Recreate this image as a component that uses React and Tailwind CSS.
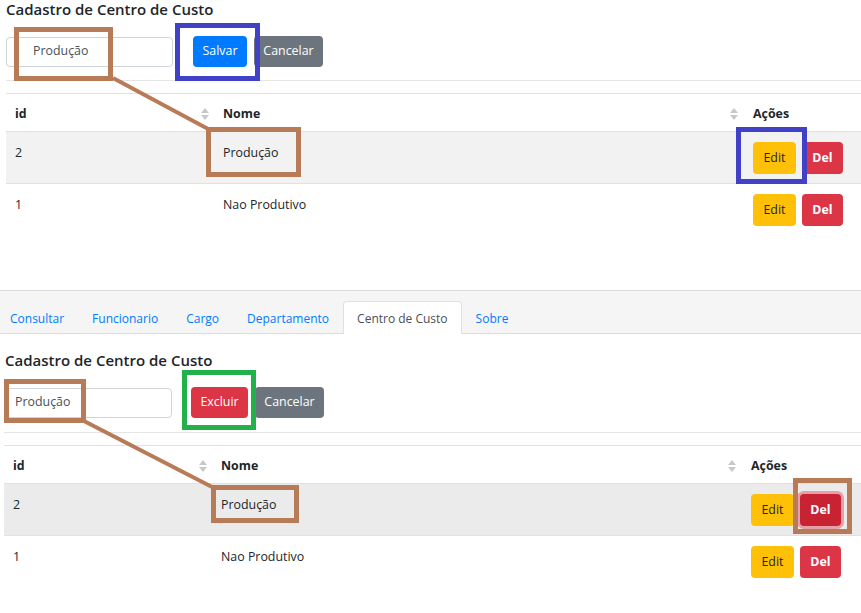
import React from "react";

const font = { fontFamily: '"Open Sans", "Noto Sans", sans-serif' };

function SortIcon() {
  return (
    <svg width="8" height="12" viewBox="0 0 8 12" className="shrink-0">
      <path d="M4 0 L8 5 L0 5 Z" fill="#c8c8c8" />
      <path d="M4 12 L8 7 L0 7 Z" fill="#c8c8c8" />
    </svg>
  );
}

function Table({ hoverRow, delActive, wide }) {
  const rows = [
    { id: "2", nome: "Produção" },
    { id: "1", nome: "Nao Produtivo" },
  ];
  const actW = wide ? "w-[119px]" : "w-[117px]";
  return (
    <div className="border-t border-[#dee2e6]">
      <div className="flex h-[38px] items-center border-b border-[#dee2e6] pt-[3px] text-[12.4px] font-bold text-[#212529]">
        <div className="flex w-[208px] items-center justify-between pl-[9px] pr-[5px]">
          <span>id</span>
          <SortIcon />
        </div>
        <div className="flex flex-1 items-center justify-between pl-[9px] pr-[6px]">
          <span>Nome</span>
          <SortIcon />
        </div>
        <div className={actW + " pl-[9px]"}>Ações</div>
      </div>
      {rows.map((r, i) => (
        <div
          key={r.id}
          className={
            "flex h-[52px] text-[12.4px] text-[#212529] " +
            (i === 0 ? "border-b border-[#dee2e6] " : "") +
            (i === 0 ? (hoverRow ? "bg-[#ebebeb]" : "bg-[#f2f2f2]") : "bg-white")
          }
        >
          <div className="w-[208px] pl-[9px] pt-[12px]">{r.id}</div>
          <div className="flex-1 pl-[9px] pt-[12px]">{r.nome}</div>
          <div className={actW + " flex gap-[6px] pl-[9px] pt-[10px]"}>
            <button className="h-[32px] w-[43px] rounded-[4px] bg-[#ffc107] text-[12.4px] text-[#212529]">
              Edit
            </button>
            <button
              className={
                "h-[32px] w-[41px] rounded-[4px] text-[12.4px] font-bold text-white " +
                (delActive && i === 0
                  ? "bg-[#c82333] shadow-[0_0_0_3px_rgba(225,83,97,0.5)]"
                  : "bg-[#dc3545]")
              }
            >
              Del
            </button>
          </div>
        </div>
      ))}
    </div>
  );
}

export default function App() {
  const tabs = ["Consultar", "Funcionario", "Cargo", "Departamento", "Centro de Custo", "Sobre"];
  return (
    <div className="relative h-[613px] w-[861px] overflow-hidden bg-white" style={font}>
      {/* Top section */}
      <div className="pl-[6px]">
        <h5 className="mt-[-1px] text-[15px] font-semibold leading-[20px] text-[#212529]">
          Cadastro de Centro de Custo
        </h5>
        <div className="mt-[17px] flex items-center">
          <div className="flex h-[30px] w-[167px] items-center rounded-[4px] border border-[#ced4da] pl-[26px] text-[12.4px] text-[#495057]">
            Produção
          </div>
          <button className="ml-[20px] h-[31px] w-[54px] rounded-[4px] bg-[#007bff] text-[12.4px] text-white">
            Salvar
          </button>
          <button className="ml-[7px] h-[31px] w-[69px] rounded-[4px] bg-[#6c757d] text-[12.4px] text-white">
            Cancelar
          </button>
        </div>
        <div className="mt-[13px] border-t border-[#e5e5e5]" />
        <div className="mt-[12px]">
          <Table />
        </div>
      </div>

      {/* Tab bar */}
      <div className="mt-[54px] flex h-[44px] items-end border-y border-[#dcdcdc] bg-[#f5f5f5]">
        <div className="mb-[-1px] flex items-end text-[12px]">
          {tabs.map((t, i) =>
            t === "Centro de Custo" ? (
              <div
                key={t}
                className="flex h-[33px] items-center rounded-t-[4px] border border-b-0 border-[#dee2e6] bg-white px-[13px] pt-[2px] text-[#495057]"
              >
                {t}
              </div>
            ) : (
              <div
                key={t}
                className={
                  "flex h-[33px] items-center pt-[2px] text-[#007bff] " +
                  (i === 0 ? "pl-[10px] pr-[14px]" : "px-[14px]")
                }
              >
                {t}
              </div>
            )
          )}
        </div>
      </div>

      {/* Bottom section */}
      <div className="pl-[4px]">
        <h5 className="mt-[16px] pl-[1px] text-[15px] font-semibold leading-[20px] text-[#212529]">
          Cadastro de Centro de Custo
        </h5>
        <div className="mt-[17px] flex items-center pl-[2px]">
          <div className="flex h-[30px] w-[166px] items-center rounded-[4px] border border-[#ced4da] pl-[8px] text-[12.4px] text-[#495057]">
            Produção
          </div>
          <button className="ml-[19px] h-[31px] w-[57px] rounded-[4px] bg-[#dc3545] text-[12.4px] text-white">
            Excluir
          </button>
          <button className="ml-[7px] h-[31px] w-[69px] rounded-[4px] bg-[#6c757d] text-[12.4px] text-white">
            Cancelar
          </button>
        </div>
        <div className="mt-[14px] border-t border-[#e5e5e5]" />
        <div className="mt-[12px]">
          <Table hoverRow delActive wide />
        </div>
      </div>

      {/* Annotations */}
      <div className="pointer-events-none absolute left-[14px] top-[27px] h-[54px] w-[99px] border-[5px] border-[#b87b58]" />
      <div className="pointer-events-none absolute left-[206px] top-[127px] h-[50px] w-[95px] border-[5px] border-[#b87b58]" />
      <div className="pointer-events-none absolute left-[175px] top-[23px] h-[58px] w-[85px] border-[5px] border-[#4141c8]" />
      <div className="pointer-events-none absolute left-[736px] top-[127px] h-[57px] w-[71px] border-[5px] border-[#4141c8]" />
      <div className="pointer-events-none absolute left-[182px] top-[370px] h-[60px] w-[74px] border-[5px] border-[#22b04a]" />
      <div className="pointer-events-none absolute left-[4px] top-[379px] h-[44px] w-[82px] border-[5px] border-[#b87b58]" />
      <div className="pointer-events-none absolute left-[211px] top-[485px] h-[38px] w-[88px] border-[5px] border-[#b87b58]" />
      <div className="pointer-events-none absolute left-[793px] top-[478px] h-[56px] w-[59px] border-[5px] border-[#b87b58]" />
      <svg className="pointer-events-none absolute left-0 top-0" width="861" height="613">
        <line x1="113" y1="78" x2="210" y2="130" stroke="#b87b58" strokeWidth="4" />
        <line x1="84" y1="421" x2="214" y2="488" stroke="#b87b58" strokeWidth="4" />
      </svg>
    </div>
  );
}
